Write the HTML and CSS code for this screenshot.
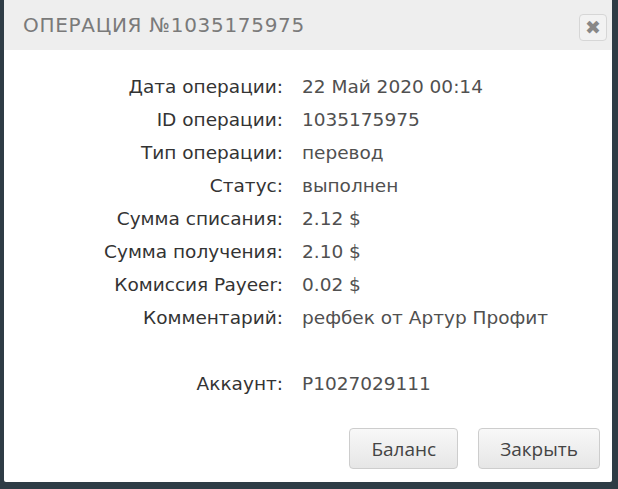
FILE: index.html
```html
<!DOCTYPE html>
<html lang="ru">
<head>
    <meta charset="UTF-8">
    <meta name="viewport" content="width=device-width, initial-scale=1.0">
    <title>Операция №1035175975</title>
    <link rel="stylesheet" href="styles.css">
</head>
<body>
    <div class="dialog">
        <div class="dialog-header">
            <h2>ОПЕРАЦИЯ №1035175975</h2>
            <button class="close-x" title="Закрыть">&#10006;</button>
        </div>
        <div class="dialog-body">
            <div class="info">
                <span class="label">Дата операции:</span><span class="value">22 Май 2020 00:14</span>
                <span class="label">ID операции:</span><span class="value">1035175975</span>
                <span class="label">Тип операции:</span><span class="value">перевод</span>
                <span class="label">Статус:</span><span class="value">выполнен</span>
                <span class="label">Сумма списания:</span><span class="value">2.12 $</span>
                <span class="label">Сумма получения:</span><span class="value">2.10 $</span>
                <span class="label">Комиссия Payeer:</span><span class="value">0.02 $</span>
                <span class="label">Комментарий:</span><span class="value">рефбек от Артур Профит</span>
                <span class="label gap"></span><span class="value gap"></span>
                <span class="label">Аккаунт:</span><span class="value">P1027029111</span>
            </div>
        </div>
        <div class="dialog-footer">
            <button class="btn">Баланс</button>
            <button class="btn">Закрыть</button>
        </div>
    </div>
</body>
</html>
```

FILE: styles.css
```css
* { margin: 0; padding: 0; box-sizing: border-box; }
html, body { height: 100%; }
body { background-color: #2e3c45; padding: 0 6px 7px 4px; font-family: "Open Sans", Arial, sans-serif; }
.dialog { background: white; height: 100%; display: flex; flex-direction: column; border-radius: 0 0 2px 2px; }

/* Header */
.dialog-header { height: 50px; background-color: #eeeeee; display: flex; align-items: center; justify-content: space-between; padding: 0 5px 0 19px; }
.dialog-header h2 { font-family: "DejaVu Sans", sans-serif; font-weight: normal; font-size: 20px; letter-spacing: 0.7px; color: #7a7a7a; }
.close-x { width: 28px; height: 27px; margin-top: 4px; border: 1px solid #d6d6d6; border-radius: 4px; background: #f2f2f2; color: #888; font-size: 19px; line-height: 1; cursor: pointer; }

/* Operation details */
.dialog-body { flex: 1; padding-top: 20px; }
.info { display: grid; grid-template-columns: 279px 1fr; grid-auto-rows: 33px; column-gap: 19px; align-items: center; font-family: "DejaVu Sans", sans-serif; font-size: 18.5px; }
.info .label { text-align: right; color: #333; }
.info .value { color: #505050; }
.info .gap { height: 31px; }

/* Footer */
.dialog-footer { display: flex; justify-content: flex-end; gap: 20px; padding: 0 12px 13px 0; }
.btn { height: 41px; padding: 0 21px; font-family: "Open Sans", Arial, sans-serif; font-size: 19px; color: #444; background: linear-gradient(#f8f8f8, #e6e6e6); border: 1px solid #cdcdcd; border-radius: 4px; cursor: pointer; }
.btn:hover { background: #e6e6e6; }
```
